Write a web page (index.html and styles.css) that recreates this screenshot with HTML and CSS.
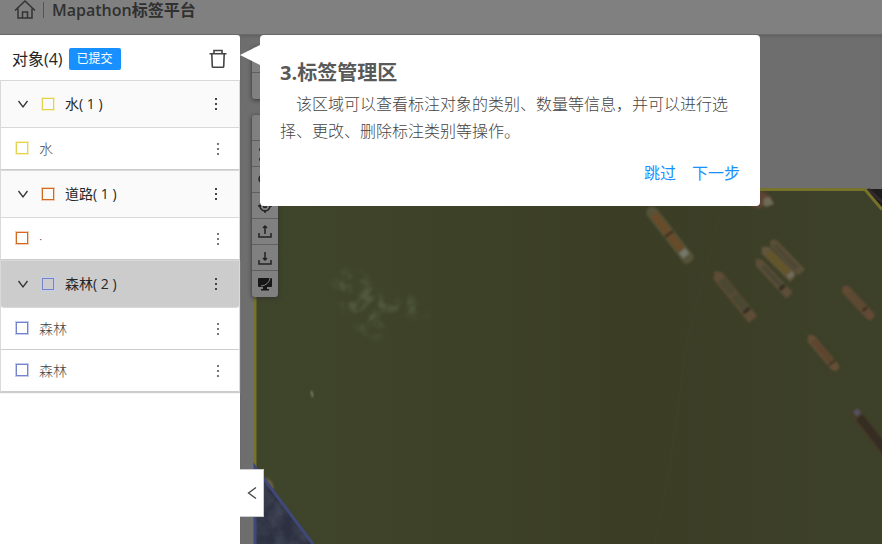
FILE: index.html
```html
<!DOCTYPE html>
<html lang="zh-CN">
<head>
<meta charset="utf-8">
<meta name="viewport" content="width=device-width, initial-scale=1">
<title>Mapathon标签平台</title>
<link rel="stylesheet" href="styles.css">
</head>
<body>
<svg class="sprite" aria-hidden="true">
  <symbol id="more" viewBox="0 0 14 14"><path d="M6 1h2v2H6zM6 6h2v2H6zM6 11h2v2H6z" fill="currentColor"/></symbol>
  <symbol id="down" viewBox="0 0 12 12"><path d="M1.500 3 6 9l4.500-6" fill="none" stroke="currentColor" stroke-width="1.300"/></symbol>
</svg>
<header class="topbar">
  <a class="home" href="#" aria-label="首页">
    <svg viewBox="0 0 22 20"><path d="M1 10.500 11 1 21 10.500M4 8.500V18h14V8.500M8.500 18V12h5v6" fill="none" stroke="currentColor" stroke-width="1.500"/></svg>
  </a>
  <span class="divider"></span>
  <h1 class="brand">Mapathon标签平台</h1>
</header>
<div class="workspace">
  <aside class="sidebar">
    <div class="panel-head">
      <h2 class="panel-title">对象(4)</h2>
      <span class="tag">已提交</span>
      <button class="trash" type="button" aria-label="删除">
        <svg viewBox="0 0 18 20"><path d="M.5 4.800h17M5 4.500V1.500h8v3M2.800 5l.5 12.500q0 .8.800.8h9.800q.8 0 .8-.8L15.200 5" fill="none" stroke="currentColor" stroke-width="1.600"/></svg>
      </button>
    </div>
    <section class="group water">
      <div class="group-head">
        <button class="toggle" type="button" aria-label="收起"><svg><use href="#down"/></svg></button>
        <span class="swatch"></span><span class="name">水( 1 )</span>
        <button class="more" type="button" aria-label="更多"><svg><use href="#more"/></svg></button>
      </div>
      <div class="item"><span class="swatch"></span><span class="name">水</span><button class="more" type="button" aria-label="更多"><svg><use href="#more"/></svg></button></div>
    </section>
    <section class="group road">
      <div class="group-head">
        <button class="toggle" type="button" aria-label="收起"><svg><use href="#down"/></svg></button>
        <span class="swatch"></span><span class="name">道路( 1 )</span>
        <button class="more" type="button" aria-label="更多"><svg><use href="#more"/></svg></button>
      </div>
      <div class="item"><span class="swatch"></span><span class="name">·</span><button class="more" type="button" aria-label="更多"><svg><use href="#more"/></svg></button></div>
    </section>
    <section class="group forest">
      <div class="group-head active">
        <button class="toggle" type="button" aria-label="收起"><svg><use href="#down"/></svg></button>
        <span class="swatch"></span><span class="name">森林( 2 )</span>
        <button class="more" type="button" aria-label="更多"><svg><use href="#more"/></svg></button>
      </div>
      <div class="item"><span class="swatch"></span><span class="name">森林</span><button class="more" type="button" aria-label="更多"><svg><use href="#more"/></svg></button></div>
      <div class="item"><span class="swatch"></span><span class="name">森林</span><button class="more" type="button" aria-label="更多"><svg><use href="#more"/></svg></button></div>
    </section>
  </aside>
  <main class="map">
    <svg class="scene" viewBox="0 0 642 509" preserveAspectRatio="xMinYMin slice" color-interpolation-filters="sRGB" aria-hidden="true">
      <defs>
        <linearGradient id="river" x1="0" x2="1" y1="0" y2="0"><stop offset="0" stop-color="#3f452b"/><stop offset=".6" stop-color="#3b3e25"/><stop offset="1" stop-color="#3e4129"/></linearGradient>
        <filter id="soft" x="-20%" y="-20%" width="140%" height="140%"><feGaussianBlur stdDeviation="0.8"/></filter>
        <filter id="foam" x="0" y="0" width="100%" height="100%"><feTurbulence type="fractalNoise" baseFrequency=".09" numOctaves="4" seed="4"/><feColorMatrix values="0 0 0 0 .42  0 0 0 0 .46  0 0 0 0 .36  3 0 0 0 -1" result="n"/><feGaussianBlur in="SourceAlpha" stdDeviation="5"/><feComposite in="n" operator="in"/><feComposite in="n" operator="in"/><feGaussianBlur stdDeviation=".8"/></filter>
        <filter id="ground" x="0" y="0" width="100%" height="100%"><feTurbulence type="fractalNoise" baseFrequency=".07" numOctaves="3" seed="8"/><feColorMatrix values="0 0 0 0 .32  0 0 0 0 .34  0 0 0 0 .4  1 0 0 0 -.3"/><feComposite in2="SourceGraphic" operator="in"/></filter>
      </defs>
      <path d="M622 154h20v22z" fill="#1f1c1d"/>
      <path d="M628 154l14 13" stroke="#332b2b" stroke-width="3"/>
      <path d="M15 154h610l17 20v335H73L15 435z" fill="url(#river)"/>
      <path d="M482 170 448 300 430 430 415 509" fill="none" stroke="#41452c" stroke-width="1" opacity=".6"/>
      <g filter="url(#foam)" opacity=".4">
        <path d="M70 220h140v110H70z" fill="none"/>
        <path d="M92 238l26-2 20 22 46 8 4 14-44-2-4 26-16-6-22-28z" fill="#fff"/>
      </g>
      <path d="M71 356l2 6" stroke="#7b8269" stroke-width="2" filter="url(#soft)"/>
      <g filter="url(#soft)">
        <g transform="translate(429 199) rotate(52)"><path d="M-33-3l4-3h62l2 3v6l-2 3h-62l-4-4z" fill="#56533a"/><path d="M-25-4h45v8h-45z" fill="#684b29"/><path d="M0-5v10" stroke="#342d1d" stroke-width="2"/><path d="M21-4h7v8h-7z" fill="#74776a"/></g>
        <g transform="translate(494 260) rotate(51)"><path d="M-31 0l6-5h56v11h-56z" fill="#5f4c36"/><path d="M-20-4h18v8h-18zM0-4h18v8H0z" fill="#4a4832"/><path d="M20-4v8" stroke="#302b22" stroke-width="3"/></g>
        <g transform="translate(546 222) rotate(46)"><path d="M-22-3l4-2h40v9h-40l-4-3z" fill="#5b4f39"/><path d="M-16-2h32v4h-32z" fill="#4d4733"/></g>
        <g transform="translate(538 228) rotate(45)"><path d="M-23 0l5-5h38l2 4v6h-40z" fill="#62553b"/><path d="M-14-3h27v6h-27z" fill="#645529"/><path d="M15-4h5v7h-5z" fill="#6f6d5c"/></g>
        <g transform="translate(533 242) rotate(47)"><path d="M-25 0l5-4h44l1 2v5l-1 2h-44z" fill="#5c4e38"/><path d="M-15-2h27v4h-27z" fill="#484633"/><path d="M14-3v7" stroke="#2d281e" stroke-width="3"/></g>
        <g transform="translate(618 267) rotate(47)"><path d="M-22 0l4-4h38l2 3v4l-2 2h-38z" fill="#624a35"/><path d="M-12-2h21v4h-21z" fill="#5a4933"/><path d="M10-3v6" stroke="#33291d" stroke-width="2"/></g>
        <g transform="translate(583 317) rotate(50)"><path d="M-23 0l5-4h38l3 2v4l-3 3h-38z" fill="#644e38"/><path d="M-15-3h27v6h-27z" fill="#5e452d"/><path d="M14-4v8" stroke="#3b3020" stroke-width="2"/></g>
        <g transform="translate(628 393) rotate(52)"><path d="M-25 0l5-5h58v11h-58z" fill="#453c2a"/><path d="M-14-4h45v8h-45z" fill="#352c22"/><path d="M-22-4h6v6h-6z" fill="#555160"/></g>
        <path d="M519 154l12 8-4 7-8 5-9-3z" fill="#5e4334"/>
        <path d="M524 163l6-1 4 7-8 3-3-3z" fill="#6e6a56"/>
        <path d="M26 442l6 5 2 7-6 2z" fill="#6d633f"/>
      </g>
      <path d="M14 432 73 509H14z" fill="#2c3040"/>
      <path d="M14 432 73 509H14z" filter="url(#ground)" fill="#444"/>
      <path d="M15 434V154.500h610l17 20" fill="none" stroke="#77732b" stroke-width="3"/>
      <path d="M15 509V432l58 77" fill="none" stroke="#404878" stroke-width="3"/>
    </svg>
    <div class="tools">
      <div class="toolset">
        <button type="button" aria-label="放大"><svg viewBox="0 0 16 16"><path d="M8 4v8M4 8h8"/></svg></button>
        <button type="button" aria-label="缩小"><svg viewBox="0 0 16 16"><path d="M4 8h8"/></svg></button>
      </div>
      <div class="toolset">
        <button type="button" aria-label="选择"><svg viewBox="0 0 16 16"><path d="m8 2 6 8H9l-1 3z"/></svg></button>
        <button type="button" aria-label="全屏"><svg viewBox="0 0 16 16"><path d="M5 3H3v2M11 2h3v3M5 14H3v-2M11 14h3v-3"/></svg></button>
        <button type="button" aria-label="搜索"><svg viewBox="0 0 16 16"><circle cx="6" cy="7" r="4"/><path d="m10 11 4 4"/></svg></button>
        <button type="button" aria-label="定位"><svg viewBox="0 0 16 16"><circle cx="8" cy="8" r="5"/><circle cx="8" cy="8" r="1.500"/><path d="M8 1v3M8 12v3M1 8h3M12 8h3"/></svg></button>
        <button type="button" aria-label="上传"><svg viewBox="0 0 16 16"><path d="M2 9v4h12V9M8 10V2M6 4l2-2 2 2"/></svg></button>
        <button type="button" aria-label="下载"><svg viewBox="0 0 16 16"><path d="M2 10v4h12v-4M8 2v8M6 8l2 2 2-2"/></svg></button>
        <button type="button" aria-label="对比"><svg viewBox="0 0 16 16"><path d="M2 2h12q1 0 1 1v7q0 1-1 1H2q-1 0-1-1V3q0-1 1-1zM4 13h8v1.500H4zM6 11h4v3H6z" fill="#171717" stroke="none"/><path d="M4 10q8-1 9-8" stroke="#808080" stroke-width="1"/></svg></button>
      </div>
    </div>
    <button class="collapse" type="button" aria-label="收起面板"><svg viewBox="0 0 12 14"><path d="M10 1.500 2.500 7l7.500 5.500" fill="none" stroke="currentColor" stroke-width="1.300"/></svg></button>
    <section class="guide" role="dialog" aria-labelledby="guide-title">
      <h2 id="guide-title" class="guide-title">3.标签管理区</h2>
      <p class="guide-text">该区域可以查看标注对象的类别、数量等信息，并可以进行选择、更改、删除标注类别等操作。</p>
      <div class="guide-actions"><button type="button">跳过</button><button type="button">下一步</button></div>
    </section>
  </main>
</div>
</body>
</html>
```
FILE: styles.css
```css
* { box-sizing: border-box; }
body {
  margin: 0;
  min-height: 100vh;
  display: flex;
  flex-direction: column;
  font-family: "Open Sans", "Noto Sans CJK SC", sans-serif;
  font-size: 14px;
  color: #262626;
  background: #6e6e6e;
}
h1, h2, p { margin: 0; }
button { border: 0; padding: 0; background: none; color: inherit; font: inherit; cursor: pointer; }
svg { display: block; }
.sprite { position: absolute; width: 0; height: 0; }

.topbar {
  display: flex;
  align-items: center;
  height: 35px;
  padding: 0 14px 14px;
  background: #808080;
  border-bottom: 1px solid #696969;
  color: #333;
}
.home { color: inherit; }
.home svg { width: 22px; height: 20px; }
.divider { width: 1px; height: 16px; margin: 0 8px 0 7px; background: #555; }
.brand { font-size: 16px; line-height: 20px; font-weight: 600; color: #303030; white-space: nowrap; }

.workspace { display: flex; flex: 1; }
.sidebar { width: 240px; flex: none; background: #fff; border-top-right-radius: 3px; }
.panel-head { display: flex; align-items: center; height: 45px; padding: 2px 13px 0 12px; }
.panel-title { font-size: 16px; line-height: 24px; font-weight: 400; }
.tag {
  margin-left: 6px;
  padding: 0 8px;
  border-radius: 2px;
  background: #1890ff;
  color: #fff;
  font-size: 12px;
  line-height: 22px;
}
.trash { margin-left: auto; color: #444; }
.trash svg { width: 18px; height: 20px; }

.group { border: 1px solid #d9d9d9; border-bottom: 0; }
.group:last-child { box-shadow: 0 1px 1px #ccc; }
.group-head, .item { display: flex; align-items: center; }
.group-head { height: 47px; padding: 0 16px; background: #fafafa; border-bottom: 1px solid #d9d9d9; }
.group-head.active { background: #ccc; border-radius: 0 0 3px 3px; }
.item { height: 42px; padding: 0 14px; border-bottom: 1px solid #ccc; color: #444; font-weight: 300; }
.name { line-height: 18px; }
.toggle { margin-right: 12px; color: #333; }
.toggle svg { width: 12px; height: 12px; }
.swatch { width: 12px; height: 12px; margin: 0 11px 0 1px; border: 1px solid; }
.item .swatch { margin-bottom: 2px; }
.water .swatch { border-color: #e3d34e; box-shadow: 0 0 0 1px #f6f0bf; }
.road .swatch { border-color: #d2691e; box-shadow: 0 0 0 1px #f2cdb4; }
.forest .swatch { border-color: #7484cc; box-shadow: 0 0 0 1px #c4cbeb; }
.more { margin-left: auto; color: #444; }
.item .more { color: #777; }
.more svg { width: 14px; height: 14px; }

.map { position: relative; flex: 1; min-width: 0; box-shadow: inset 0 2px 2px #646464; }
.scene { position: absolute; width: 100%; height: 100%; }
.tools { position: absolute; left: 12px; top: 12px; display: grid; gap: 16px; }
.toolset { width: 26px; border-radius: 3px; background: #808080; box-shadow: 0 1px 4px #333; }
.toolset button { display: grid; place-items: center; width: 100%; height: 26px; border-bottom: 1px solid #606060; }
.toolset button:last-child { border-bottom: 0; }
.toolset svg { width: 16px; height: 16px; fill: none; stroke: #222; stroke-width: 1.5px; }
.collapse {
  position: absolute;
  left: 0;
  bottom: 27px;
  display: grid;
  place-items: center;
  width: 24px;
  height: 48px;
  border: 1px solid #ccc;
  border-left: 0;
  background: #fff;
  color: #444;
}
.collapse svg { width: 12px; height: 14px; }

.guide {
  position: absolute;
  left: 20px;
  top: 0;
  width: 500px;
  max-width: calc(100% - 40px);
  padding: 20px;
  border-radius: 4px;
  background: #fff;
  color: #595959;
}
.guide::before {
  content: "";
  position: absolute;
  left: -20px;
  top: 10px;
  border: solid transparent;
  border-width: 10px 20px 10px 0;
  border-right-color: #fff;
}
.guide-title { font-size: 20px; line-height: 36px; font-weight: 700; }
.guide-text { font-size: 16px; line-height: 27px; text-indent: 16px; font-weight: 300; color: #444; }
.guide-actions {
  display: flex;
  justify-content: flex-end;
  gap: 16px;
  margin-top: 16px;
  font-size: 16px;
  line-height: 25px;
  color: #1890ff;
}
```
